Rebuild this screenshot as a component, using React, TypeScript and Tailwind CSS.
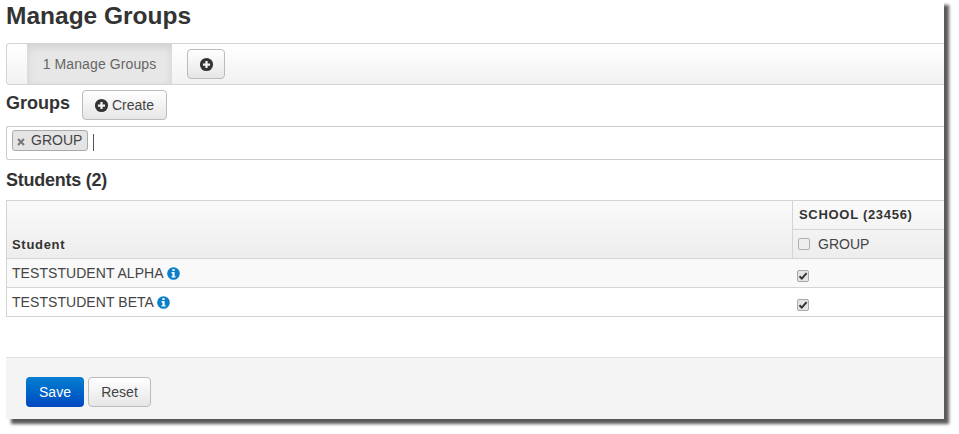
const PlusCircle = ({ className }: { className: string }) => (
  <svg viewBox="0 0 16 16" className={className} fill="none">
    <circle cx="8" cy="8" r="7" fill="currentColor" />
    <path d="M8 4.2v7.6M4.2 8h7.6" stroke="#f3f3f3" strokeWidth="2.4" />
  </svg>
);

const InfoCircle = () => (
  <svg viewBox="0 0 14 14" className="ml-[3px] h-[13px] w-[13px] shrink-0 text-[#0b7fc7]" fill="none">
    <circle cx="7" cy="7" r="6.8" fill="currentColor" />
    <rect x="5.8" y="2.3" width="2.4" height="2" fill="#fff" />
    <path d="M4.9 5.5h3.3v4.4h1v1.4H4.9V9.9h1V7H4.9z" fill="#fff" />
  </svg>
);

const CheckedBox = () => (
  <span className="flex h-[12px] w-[12px] items-center justify-center rounded-[2px] border border-[#a8a8a8] bg-[#e4e4e4]">
    <svg viewBox="0 0 10 10" className="h-[10px] w-[10px]" fill="none">
      <path d="M1.5 5.2l2.3 2.4 4.8-5.4" stroke="#333" strokeWidth="2" />
    </svg>
  </span>
);

const STUDENTS = ["TESTSTUDENT ALPHA", "TESTSTUDENT BETA"];

export default function App() {
  return (
    <div className="h-[434px] w-[959px] overflow-hidden bg-white font-['Liberation_Sans',Arial,sans-serif] text-[#333]">
      <div className="ml-[6px] flex h-[419px] w-[938px] flex-col bg-white shadow-[5px_5px_3px_rgba(0,0,0,0.65)]">
        {/* Title */}
        <h1 className="h-[43px] pt-[1px] text-[24.5px] leading-[30px] font-bold">Manage Groups</h1>

        {/* Tabs */}
        <div className="flex h-[42px] shrink-0 items-center rounded-l-[4px] border-y border-l border-[#d4d4d4] bg-gradient-to-b from-white to-[#f2f2f2] pl-[20px]">
          <div className="flex h-full w-[145px] items-center justify-center bg-[#e7e7e7] text-[14px] tracking-[0.1px] text-[#666] shadow-[inset_0_3px_8px_rgba(0,0,0,0.1)]">
            1 Manage Groups
          </div>
          <button className="ml-[15px] flex h-[30px] w-[38px] items-center justify-center rounded-[4px] border border-[#bbb] bg-gradient-to-b from-white to-[#e6e6e6] text-[#333]">
            <PlusCircle className="h-[15px] w-[15px]" />
          </button>
        </div>

        {/* Groups */}
        <div className="mt-[5px] flex h-[30px] shrink-0 items-center">
          <h2 className="w-[76px] pb-[3px] text-[18px] font-bold">Groups</h2>
          <button className="flex h-[30px] w-[85px] items-center justify-center gap-[3px] rounded-[4px] border border-[#bbb] bg-gradient-to-b from-white to-[#e6e6e6] pr-[1px] text-[14px] text-[#444]">
            <PlusCircle className="h-[15px] w-[15px] text-[#333]" />
            Create
          </button>
        </div>

        <div className="mt-[6px] flex h-[34px] shrink-0 items-start rounded-l-[3px] border-y border-l border-[#ccc] pt-[3px] pl-[5px]">
          <span className="flex h-[21px] w-[76px] items-center rounded-[3px] border border-[#aaa] bg-[#e4e4e4] pb-[1px] pl-[4px] text-[14px] text-[#444]">
            <svg viewBox="0 0 8 8" className="mt-[3px] mr-[6px] h-[8px] w-[8px] shrink-0" fill="none">
              <path d="M1 1l6 6M7 1L1 7" stroke="#777" strokeWidth="2" />
            </svg>
            GROUP
          </span>
          <span className="mt-[4px] ml-[5px] h-[17px] w-px bg-[#555]" />
        </div>

        <h2 className="mt-[9px] h-[31px] text-[18px] leading-[23px] font-bold tracking-[-0.25px]">Students (2)</h2>

        {/* Table */}
        <div className="shrink-0 border-y border-l border-[#d4d4d4]">
          <div className="flex h-[58px] border-b border-[#d4d4d4] bg-gradient-to-b from-[#fafafa] to-[#ededed]">
            <div className="flex w-[785px] shrink-0 items-end pb-[4px] pl-[5px] text-[13px] font-bold tracking-[0.7px]">
              Student
            </div>
            <div className="flex flex-1 flex-col border-l border-[#d4d4d4]">
              <div className="flex h-[29px] items-center border-b border-[#d4d4d4] pl-[6px] text-[13px] font-bold tracking-[0.7px]">
                SCHOOL (23456)
              </div>
              <div className="flex flex-1 items-center pl-[5px] text-[14px] text-[#444]">
                <span className="mr-[8px] h-[12px] w-[12px] rounded-[2px] border border-[#b0b0b0] bg-[#eee]" />
                GROUP
              </div>
            </div>
          </div>
          {STUDENTS.map((name, i) => (
            <div
              key={name}
              className={`flex items-center ${i === 0 ? "h-[29px] border-b border-[#d4d4d4] bg-[#f9f9f9]" : "h-[28px] bg-white"}`}
            >
              <div className="flex w-[786px] shrink-0 items-center pl-[5px] text-[14px] tracking-[0.06px] text-[#444]">
                {name}
                <InfoCircle />
              </div>
              <div className="pt-[5px] pl-[4px]">
                <CheckedBox />
              </div>
            </div>
          ))}
        </div>

        {/* Footer */}
        <div className="mt-auto flex h-[62px] shrink-0 items-start gap-[4px] border-t border-[#e2e2e2] bg-[#f4f4f4] pt-[19px] pl-[20px]">
          <button className="h-[30px] w-[58px] rounded-[4px] bg-gradient-to-b from-[#0a7fd0] to-[#0047c0] text-[14px] text-white">
            Save
          </button>
          <button className="h-[30px] w-[63px] rounded-[4px] border border-[#bbb] bg-gradient-to-b from-white to-[#e6e6e6] text-[14px] text-[#444]">
            Reset
          </button>
        </div>
      </div>
    </div>
  );
}
